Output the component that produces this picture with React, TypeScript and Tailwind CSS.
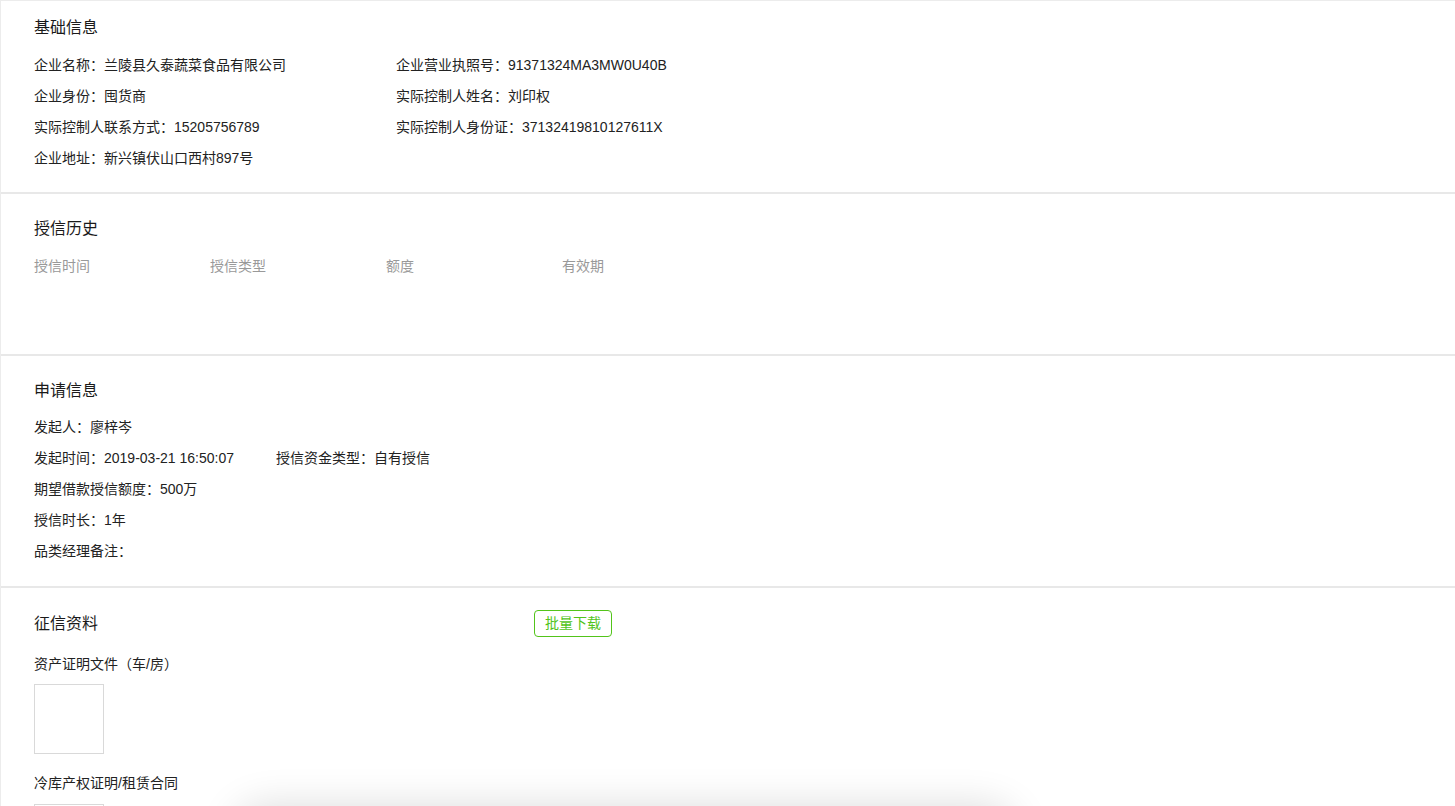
import React from "react";

const font = { fontFamily: '"Liberation Sans", "Noto Sans CJK SC", sans-serif' };

function Title({ children }: { children: React.ReactNode }) {
  return <div className="h-6 leading-6 text-base text-[#1a1a1a]">{children}</div>;
}

function Row({ children }: { children: React.ReactNode }) {
  return <div className="flex h-[31px] leading-[31px] text-sm text-[#222]">{children}</div>;
}

function ImageBox() {
  return <div className="w-[70px] h-[70px] border border-[#d9d9d9] bg-white" />;
}

export default function App() {
  return (
    <div className="min-h-screen bg-white" style={font}>
      <div className="border-t border-l border-[#ececec] shadow-[0_1px_2px_rgba(0,0,0,0.04)]">
        {/* 基础信息 */}
        <section className="px-[33px] pt-[15px] pb-[18px] border-b-2 border-[#e8e8e8]">
          <Title>基础信息</Title>
          <div className="mt-[10px] grid grid-cols-[362px_1fr]">
            <Row>企业名称：兰陵县久泰蔬菜食品有限公司</Row>
            <Row>企业营业执照号：91371324MA3MW0U40B</Row>
            <Row>企业身份：囤货商</Row>
            <Row>实际控制人姓名：刘印权</Row>
            <Row>实际控制人联系方式：15205756789</Row>
            <Row>实际控制人身份证：37132419810127611X</Row>
            <Row>企业地址：新兴镇伏山口西村897号</Row>
          </div>
        </section>

        {/* 授信历史 */}
        <section className="px-[33px] pt-[23px] pb-[72px] border-b-2 border-[#e8e8e8]">
          <Title>授信历史</Title>
          <div className="mt-[10px] grid grid-cols-[176px_176px_176px_176px] h-[31px] leading-[31px] text-sm text-[#999]">
            <span>授信时间</span>
            <span>授信类型</span>
            <span>额度</span>
            <span>有效期</span>
          </div>
        </section>

        {/* 申请信息 */}
        <section className="px-[33px] pt-[23px] pb-[19px] border-b-2 border-[#e8e8e8]">
          <Title>申请信息</Title>
          <div className="mt-[9px]">
            <Row>发起人：廖梓岑</Row>
            <Row>
              <span className="w-[242px] shrink-0">发起时间：2019-03-21 16:50:07</span>
              <span>授信资金类型：自有授信</span>
            </Row>
            <Row>期望借款授信额度：500万</Row>
            <Row>授信时长：1年</Row>
            <Row>品类经理备注：</Row>
          </div>
        </section>

        {/* 征信资料 */}
        <section className="px-[33px] pt-[22px] pb-10">
          <div className="flex items-center">
            <div className="w-[500px]">
              <Title>征信资料</Title>
            </div>
            <button className="h-[27px] px-[10px] rounded-[4px] border border-[#52c41a] text-sm text-[#52c41a] leading-[25px]">
              批量下载
            </button>
          </div>
          <div className="mt-[12px]">
            <Row>资产证明文件（车/房）</Row>
          </div>
          <div className="mt-[4px]">
            <ImageBox />
          </div>
          <div className="mt-[14px]">
            <Row>冷库产权证明/租赁合同</Row>
          </div>
          <div className="mt-[5px]">
            <ImageBox />
          </div>
        </section>
      </div>

      {/* floating bar shadow at bottom */}
      <div className="fixed left-[235px] top-[806px] w-[780px] h-[60px] rounded-[30px] bg-white shadow-[0_0_40px_rgba(0,0,0,0.14)]" />
    </div>
  );
}
